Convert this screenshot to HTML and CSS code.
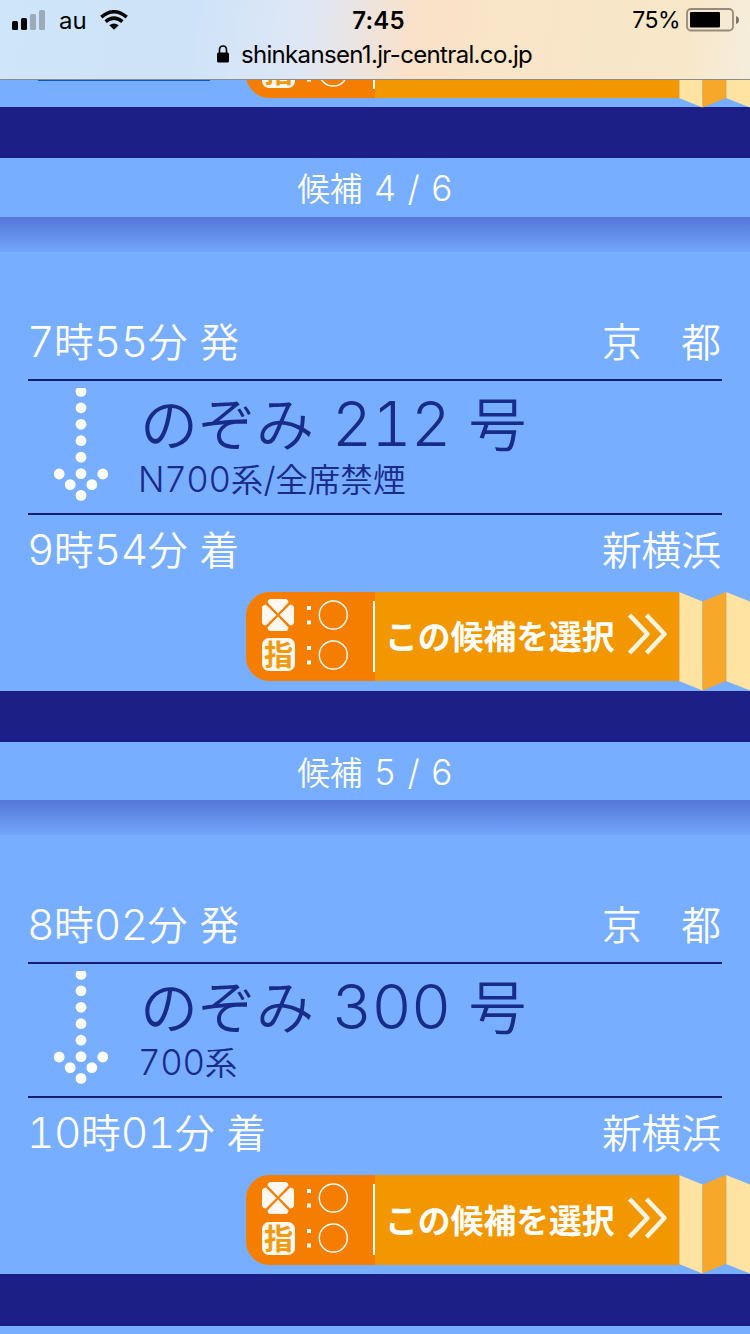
FILE: index.html
```html
<!DOCTYPE html>
<html lang="ja">
  <head>
    <meta charset="utf-8">
    <meta name="viewport" content="width=device-width,initial-scale=1.0">
    <title>列車候補</title>
    <link rel="stylesheet" href="styles.css">
  </head>
  <body>
    <!-- shared drawings -->
    <svg class="defs" width="0" height="0">
      <symbol id="arrow" viewBox="0 0 56 114">
        <g fill="#fff">
          <circle cx="28" cy="3.4" r="5.4"/>
          <circle cx="28" cy="19.8" r="5.4"/>
          <circle cx="28" cy="36.3" r="5.4"/>
          <circle cx="28" cy="52.7" r="5.4"/>
          <circle cx="28" cy="69.2" r="5.4"/>
          <circle cx="28" cy="85.6" r="5.4"/>
          <circle cx="6.2" cy="86" r="5.4"/>
          <circle cx="49.8" cy="86" r="5.4"/>
          <circle cx="17.2" cy="96.6" r="5.4"/>
          <circle cx="38.8" cy="96.6" r="5.4"/>
          <circle cx="28" cy="107.4" r="5.4"/>
        </g>
      </symbol>
      <symbol id="nosmoking" viewBox="0 0 32 32">
        <g fill="#fff8f0">
          <path d="M8.500 0H23.500Q26 0 26.500 3.500L16 14.500 5.500 3.500Q6 0 8.500 0z"/>
          <path d="M8.500 32H23.500Q26 32 26.500 28.500L16 17.500 5.500 28.500Q6 32 8.500 32z"/>
          <path d="M0 8Q1 5.500 3.800 5.500L14.500 16 3.800 26.500Q1 26.500 0 24z"/>
          <path d="M32 8Q31 5.500 28.200 5.500L17.500 16 28.200 26.500Q31 26.500 32 24z"/>
        </g>
      </symbol>
      <symbol id="vacant" viewBox="0 0 44 32">
        <path d="M2 7h4v4H2zM2 21.500h4v4H2z" fill="#fff"/>
        <circle cx="28.300" cy="16" r="14" fill="none" stroke="#fff" stroke-width="1.400"/>
      </symbol>
      <symbol id="chevrons" viewBox="0 0 44 46">
        <path d="M3.500 4L21.500 23 3.500 42M20.500 4L38.500 23 20.500 42" fill="none" stroke="#fff4df" stroke-width="4.600" stroke-linejoin="round"/>
      </symbol>
      <symbol id="pleats" viewBox="0 0 71 99">
        <path d="M0 0L23.500 9.500V98.500L0 89z" fill="#ffe3a2"/>
        <path d="M23.500 9.500L47 0V89L23.500 98.500z" fill="#f7a729"/>
        <path d="M47 0L71 9.500V98.500L47 89z" fill="#ffe3a2"/>
        <path d="M.3 0V89M47 0V89" stroke="#c9a96b" stroke-width=".7"/>
      </symbol>
    </svg>

    <header class="browser">
      <div class="status">
        <div class="carrier">
          <svg width="34" height="20" viewBox="0 0 34 20">
            <rect x="0" y="11" width="6" height="9" rx="1.500"/>
            <rect x="9" y="8" width="6" height="12" rx="1.500"/>
            <rect x="18" y="4" width="6" height="16" rx="1.500" fill="#9caaba"/>
            <rect x="27" y="0" width="6" height="20" rx="1.500" fill="#9caaba"/>
          </svg>
          <span class="au">au</span>
          <svg width="28" height="20" viewBox="0 0 28 20" fill="none" stroke="#000" stroke-width="3.500">
            <path d="M1.300 7.100Q14-3.600 26.700 7.100"/>
            <path d="M5.600 11.600Q14 4.600 22.400 11.600"/>
            <path d="M9.300 15.200Q14 11.800 18.700 15.200L14 19.800z" fill="#000" stroke="none"/>
          </svg>
        </div>
        <div class="time">7:45</div>
        <div class="power">
          <span>75%</span>
          <svg width="53" height="24" viewBox="0 0 53 24">
            <rect x="1" y="1" width="46" height="21.500" rx="4" fill="none" stroke="#938b7c" stroke-width="1.800"/>
            <rect x="4" y="4" width="30" height="15.500" rx="1"/>
            <path d="M50 8Q53 9 53 12T50 16z" fill="#7d766a"/>
          </svg>
        </div>
      </div>
      <div class="address">
        <svg width="12" height="18" viewBox="0 0 12 18">
          <path d="M2.500 8V5Q2.500 1 6 1T9.500 5V8" fill="none" stroke="#000" stroke-width="1.600"/>
          <rect x="0" y="7.500" width="12" height="10" rx="1.500"/>
        </svg>
        <span>shinkansen1.jr-central.co.jp</span>
      </div>
    </header>

    <main>
      <section class="previous">
        <div class="back"></div>
        <div class="actions">
          <a class="select">
            <span class="seats">
              <span class="seat"><svg class="mark"><use href="#nosmoking"/></svg><svg class="state"><use href="#vacant"/></svg></span>
              <span class="seat"><b class="reserved">指</b><svg class="state"><use href="#vacant"/></svg></span>
            </span>
          </a>
          <svg class="pleats"><use href="#pleats"/></svg>
        </div>
      </section>

      <article class="candidate">
        <h2>候補 <span class="num">4</span> <span class="num">/</span> <span class="num">6</span></h2>
        <div class="body">
          <div class="stop">
            <span><span class="num">7</span>時<span class="num">55</span>分 発</span>
            <span>京　都</span>
          </div>
          <div class="train">
            <svg class="arrow"><use href="#arrow"/></svg>
            <div>
              <p class="name">のぞみ <span class="num">212</span> 号</p>
              <p class="type"><span class="num">N700</span>系<span class="num">/</span>全席禁煙</p>
            </div>
          </div>
          <div class="stop arrive">
            <span><span class="num">9</span>時<span class="num">54</span>分 着</span>
            <span>新横浜</span>
          </div>
          <div class="actions">
            <a class="select">
              <span class="seats">
                <span class="seat"><svg class="mark"><use href="#nosmoking"/></svg><svg class="state"><use href="#vacant"/></svg></span>
                <span class="seat"><b class="reserved">指</b><svg class="state"><use href="#vacant"/></svg></span>
              </span>
              <span class="label">この候補を選択</span>
              <svg class="chevrons"><use href="#chevrons"/></svg>
            </a>
            <svg class="pleats"><use href="#pleats"/></svg>
          </div>
        </div>
      </article>

      <article class="candidate">
        <h2>候補 <span class="num">5</span> <span class="num">/</span> <span class="num">6</span></h2>
        <div class="body">
          <div class="stop">
            <span><span class="num">8</span>時<span class="num">02</span>分 発</span>
            <span>京　都</span>
          </div>
          <div class="train">
            <svg class="arrow"><use href="#arrow"/></svg>
            <div>
              <p class="name">のぞみ <span class="num">300</span> 号</p>
              <p class="type"><span class="num">700</span>系</p>
            </div>
          </div>
          <div class="stop arrive">
            <span><span class="num">10</span>時<span class="num">01</span>分 着</span>
            <span>新横浜</span>
          </div>
          <div class="actions">
            <a class="select">
              <span class="seats">
                <span class="seat"><svg class="mark"><use href="#nosmoking"/></svg><svg class="state"><use href="#vacant"/></svg></span>
                <span class="seat"><b class="reserved">指</b><svg class="state"><use href="#vacant"/></svg></span>
              </span>
              <span class="label">この候補を選択</span>
              <svg class="chevrons"><use href="#chevrons"/></svg>
            </a>
            <svg class="pleats"><use href="#pleats"/></svg>
          </div>
        </div>
      </article>
      <div class="divider"></div>
    </main>
  </body>
</html>
```
FILE: styles.css
```css
* {
    box-sizing: border-box;
}
html, body, p, h2 {
    margin: 0;
    padding: 0;
}
body {
    display: flex;
    flex-direction: column;
    height: 1334px;
    overflow: hidden;
    background-color: #78aeff;
    color: #fff;
    font-family: "Noto Sans CJK JP", sans-serif;
    font-weight: 350;
}
svg {
    display: block;
    flex: none;
}
.defs {
    position: absolute;
}
/* browser chrome */
.browser {
    flex: none;
    height: 80px;
    border-bottom: 1px solid #8b8c8c;
    color: #000;
    font-family: Inter, "Liberation Sans", sans-serif;
    font-weight: 400;
    font-size: 24px;
    background: linear-gradient(100deg, #cfe5fa 0%, #cee3f8 25%, #dfe7f5 41%, #fae1c9 55%, #f9e5c8 65%, #f8e7c8 90%, #f5eddc 100%);
}
.status {
    display: grid;
    grid-template-columns: 1fr auto 1fr;
    align-items: center;
    height: 40px;
    padding: 0 11px 0 12px;
}
.carrier {
    display: flex;
    align-items: center;
}
.au {
    margin: 0 13px;
    font-size: 24px;
}
.time {
    font-weight: 600;
    letter-spacing: .2px;
    padding-left: 6px;
}
.power {
    display: flex;
    justify-content: flex-end;
    align-items: center;
    gap: 6px;
    font-size: 23px;
    letter-spacing: -.5px;
}
.address {
    display: flex;
    justify-content: center;
    align-items: center;
    gap: 12px;
    height: 28px;
    padding-right: 1px;
    letter-spacing: -.66px;
}
/* list of trains */
main {
    flex: 1;
    min-height: 0;
    overflow: hidden;
}
.previous {
    display: flex;
    justify-content: space-between;
    align-items: flex-end;
    height: 27px;
}
.back {
    align-self: flex-start;
    width: 172px;
    height: 1px;
    margin-left: 38px;
    background-color: #0a55d0;
}
.candidate {
    height: 583.6px;
    border-top: 51.300px solid #1c1f85;
}
.divider {
    height: 51.500px;
    background-color: #1c1f85;
}
h2 {
    height: 58.700px;
    font-size: 32.700px;
    line-height: 58px;
    font-weight: 350;
    text-align: center;
    word-spacing: 4px;
}
.num {
    font-family: Inter, "Liberation Sans", sans-serif;
    font-variant-numeric: tabular-nums;
    font-size: 1.07em;
    font-weight: 300;
    line-height: 1;
    letter-spacing: -.01em;
}
.body {
    padding-top: 90px;
    background: linear-gradient(#5477d8, #72a5fa 35px, #78aeff 35px);
}
.stop {
    display: flex;
    justify-content: space-between;
    height: 72px;
    padding: 0 29px 0 27px;
    font-size: 39.700px;
    line-height: 66px;
    word-spacing: 3px;
}
.train {
    display: flex;
    height: 136px;
    margin: 0 28px;
    padding: 7px 0 0 25px;
    border-top: 2.400px solid #171c6c;
    border-bottom: 2.400px solid #171c6c;
    color: #182a8a;
}
.arrow {
    width: 56px;
    height: 114px;
    margin-right: 29px;
}
.name {
    height: 72px;
    padding-left: 2px;
    font-size: 58px;
    line-height: 66px;
    word-spacing: 5px;
}
.type {
    font-size: 32.600px;
    line-height: 36px;
}
.arrive {
    height: 77px;
}
.actions {
    display: flex;
    justify-content: flex-end;
    height: 98.500px;
}
.previous .actions {
    flex: none;
}
.select {
    display: flex;
    align-items: center;
    width: 434px;
    height: 89.500px;
    border-radius: 24px 0 0 24px;
    overflow: hidden;
    background-color: #f39700;
}
.seats {
    display: flex;
    flex-direction: column;
    gap: 8px;
    width: 129px;
    height: 100%;
    padding: 7px 0 0 16px;
    background: linear-gradient(#fff, #fff) 127px 9px / 2px 71px no-repeat #f57e00;
}
.seat {
    display: flex;
    align-items: center;
    gap: 11px;
    height: 32px;
}
.mark {
    width: 32px;
    height: 32px;
}
.state {
    width: 44px;
    height: 32px;
}
.reserved {
    width: 33px;
    height: 33px;
    margin-right: -1px;
    border-radius: 7px;
    background-color: #fff8f0;
    color: #f09a10;
    font-size: 29px;
    line-height: 31px;
    font-weight: 700;
    text-align: center;
}
.label {
    margin: -4px 0 0 10px;
    font-size: 32.800px;
    font-weight: 700;
    white-space: nowrap;
}
.chevrons {
    width: 44px;
    height: 46px;
    margin: -4px 0 0 11px;
}
.pleats {
    width: 71px;
    height: 99px;
    margin-left: -1px;
}
```
